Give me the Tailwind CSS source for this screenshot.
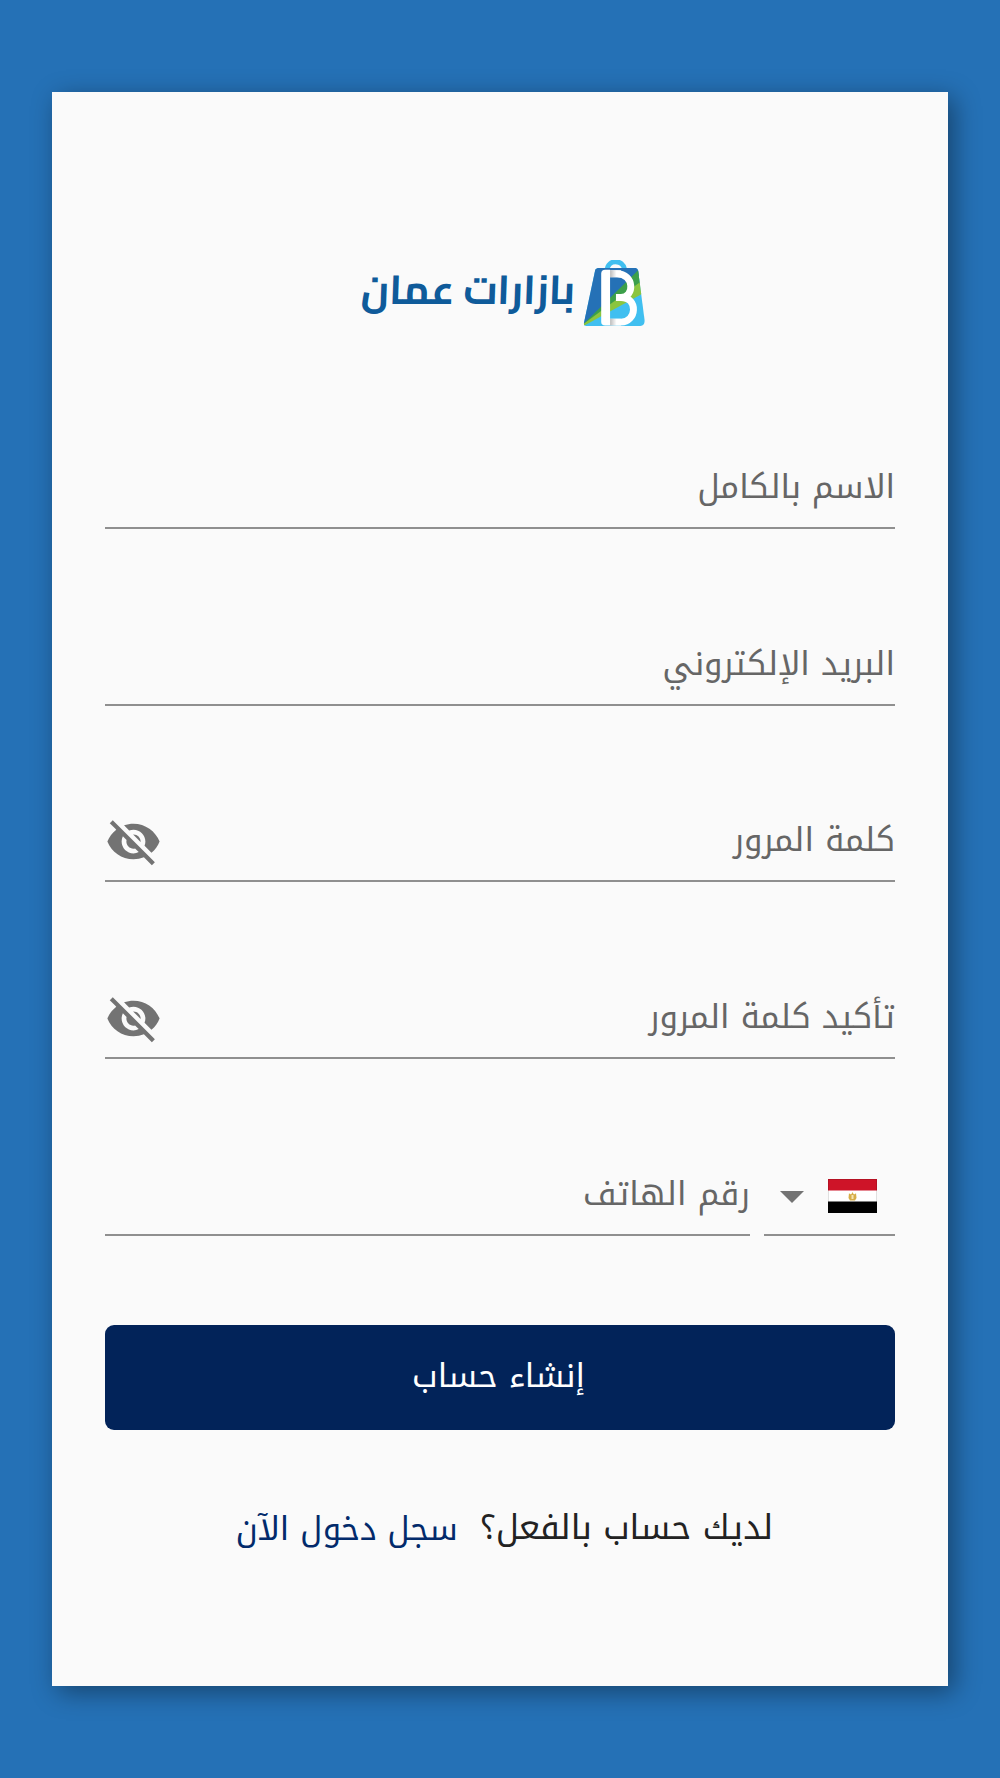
<!DOCTYPE html>
<html dir="rtl" lang="ar">
<head>
<meta charset="utf-8">
<title>إنشاء حساب</title>
<script src="https://cdn.jsdelivr.net/npm/@tailwindcss/browser@4"></script>
</head>
<body class="w-[1000px] h-[1778px] overflow-hidden bg-[#2571b6] pt-[92px] px-[52px] font-['Noto_Kufi_Arabic','Cairo','DejaVu_Sans',sans-serif]">
<main class="w-[896px] h-[1593.5px] bg-[#fafafa] shadow-[6px_6px_24px_rgba(0,0,0,0.4)] px-[53px] flex flex-col text-[32.9px] leading-[48px] text-[#666]">
  <header class="h-[258px] pt-[168px] pr-[249px] flex items-start gap-[8px]">
    <svg class="w-[63px] h-[68px] shrink-0" viewBox="0 0 63 69">
      <defs>
        <clipPath id="bag"><path d="M12 10Q13 8 16 8H52Q55 8 55.500 11L62 61Q62.500 67 57 67H3Q0 67 .5 64Z"/></clipPath>
        <linearGradient id="fold" x1="0" x2="1"><stop offset="0" stop-color="#bbb"/><stop offset=".6" stop-color="#fff"/></linearGradient>
      </defs>
      <path d="M24 10C25 -1 40 -1 42 10" fill="none" stroke="#40bff0" stroke-width="5"/>
      <g clip-path="url(#bag)">
        <path d="M0 0H63V69H0Z" fill="#40bff0"/>
        <path d="M0 0H63V10L0 66Z" fill="#2571b6"/>
        <path d="M0 65L57 9L60 24L0 67Z" fill="#3c9f4a"/>
        <path d="M0 65L58 22L62 33L0 67Z" fill="#8bc53f"/>
      </g>
      <path d="M27 14H34C52 14 52 38 38 38H33" fill="none" stroke="#fff" stroke-width="7"/>
      <path d="M33 38H38C56 38 54 63 38 63H27" fill="none" stroke="#fff" stroke-width="7"/>
      <path d="M27 10.500H38V17.500H27ZM27 59.500H38V66.500H27Z" fill="url(#fold)"/>
      <path d="M18 14Q18 10 22 10H27V66.500H22Q18 66.500 18 63Z" fill="#fff"/>
    </svg>
    <span class="text-[40.5px] leading-[58px] font-bold text-[#0f5b9a] whitespace-nowrap -skew-x-2 font-['Cairo','Noto_Kufi_Arabic',sans-serif]">بازارات عمان</span>
  </header>

  <div class="h-[178.750px] border-b-2 border-[#8f8f8f] flex items-end pb-[16px]"><span>الاسم بالكامل</span></div>
  <div class="h-[176.750px] border-b-2 border-[#8f8f8f] flex items-end pb-[16px]"><span>البريد الإلكتروني</span></div>
  <div class="h-[176.750px] border-b-2 border-[#8f8f8f] flex items-end justify-between pb-[16px]">
    <span>كلمة المرور</span>
    <svg class="w-[57px] h-[57px] -mb-[6px]" viewBox="0 0 24 24" fill="#737373"><path d="M12 7c2.760 0 5 2.240 5 5 0 .65-.13 1.260-.36 1.830l2.920 2.920c1.510-1.260 2.700-2.890 3.430-4.750-1.730-4.390-6-7.500-11-7.500-1.400 0-2.740.25-3.980.7l2.160 2.160C10.740 7.130 11.350 7 12 7zM2 4.270l2.280 2.280.46.46C3.080 8.300 1.780 10.020 1 12c1.730 4.390 6 7.500 11 7.500 1.550 0 3.030-.3 4.380-.84l.42.42L19.730 22 21 20.730 3.270 3 2 4.270zM7.530 9.800l1.550 1.550c-.05.21-.08.43-.08.65 0 1.660 1.340 3 3 3 .22 0 .44-.03.65-.08l1.550 1.550c-.67.33-1.410.53-2.200.53-2.760 0-5-2.240-5-5 0-.79.2-1.530.53-2.200zm4.310-.78l3.150 3.150.02-.16c0-1.660-1.340-3-3-3l-.17.01z"/></svg>
  </div>
  <div class="h-[176.750px] border-b-2 border-[#8f8f8f] flex items-end justify-between pb-[16px]">
    <span>تأكيد كلمة المرور</span>
    <svg class="w-[57px] h-[57px] -mb-[6px]" viewBox="0 0 24 24" fill="#737373"><path d="M12 7c2.760 0 5 2.240 5 5 0 .65-.13 1.260-.36 1.830l2.920 2.920c1.510-1.260 2.700-2.890 3.430-4.750-1.730-4.390-6-7.500-11-7.500-1.400 0-2.740.25-3.980.7l2.160 2.160C10.740 7.130 11.350 7 12 7zM2 4.270l2.280 2.280.46.46C3.080 8.300 1.780 10.020 1 12c1.730 4.390 6 7.500 11 7.500 1.550 0 3.030-.3 4.380-.84l.42.42L19.730 22 21 20.730 3.270 3 2 4.270zM7.530 9.800l1.550 1.550c-.05.21-.08.43-.08.65 0 1.660 1.340 3 3 3 .22 0 .44-.03.65-.08l1.550 1.550c-.67.33-1.410.53-2.200.53-2.760 0-5-2.240-5-5 0-.79.2-1.530.53-2.200zm4.310-.78l3.150 3.150.02-.16c0-1.660-1.340-3-3-3l-.17.01z"/></svg>
  </div>
  <div class="h-[176.750px] flex items-stretch gap-[14px]">
    <div class="w-[131px] border-b-2 border-[#8f8f8f] flex items-end pb-[21px] pr-[18px] gap-[24px]">
      <svg class="w-[49px] h-[34px]" viewBox="0 0 49 34">
        <path d="M0 0H49V34H0Z" fill="#fff"/><path d="M0 0H49V11.500H0Z" fill="#ce1428"/><path d="M0 22.500H49V34H0Z"/>
        <path d="M21 14Q22 16 23.500 15L24.500 13L25.500 15Q27 16 28 14L28.500 19L27 21.500H22L20.500 19Z" fill="#d6ad48"/>
        <path d="M23.500 16H25.500V20H23.500Z" fill="#f5e4b4"/>
        <path d="M.5 .5H48.500V33.500H.5Z" fill="none" stroke="#000" stroke-opacity=".12"/>
      </svg>
      <svg class="w-[24px] h-[12px] mb-[10px]" viewBox="0 0 24 12"><path d="M0 0H24L12 12Z" fill="#737373"/></svg>
    </div>
    <div class="flex-1 border-b-2 border-[#8f8f8f] flex items-end pb-[16px]"><span>رقم الهاتف</span></div>
  </div>

  <button class="mt-[89.250px] h-[105px] shrink-0 rounded-[9px] bg-[#022359] text-white flex items-center justify-center pb-[4px] pr-[3px]">إنشاء حساب</button>

  <p class="mt-[74px] flex justify-center gap-[22px] whitespace-nowrap pl-[9px]"><span class="text-[#222] text-[33.9px]">لديك حساب بالفعل؟</span><a class="text-[#022a6b] text-[32.7px] pt-px">سجل دخول الآن</a></p>
</main>
</body>
</html>
